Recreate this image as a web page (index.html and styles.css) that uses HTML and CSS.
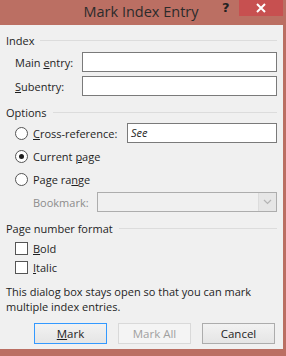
FILE: index.html
```html
<!DOCTYPE html>
<html lang="en">

<head>
    <meta charset="UTF-8">
    <title>Mark Index Entry</title>
    <link rel="stylesheet" href="styles.css">
</head>

<body>
    <div class="dialog">
        <div class="titlebar">
            <span class="title">Mark Index Entry</span>
            <span class="help">?</span>
            <span class="close">
                <svg width="10" height="10" viewBox="0 0 10 10">
                    <path d="M1 1 L9 9 M9 1 L1 9" stroke="#fff" stroke-width="2" />
                </svg>
            </span>
        </div>

        <div class="client">
            <div class="group-label"><span>Index</span></div>
            <div class="row">
                <label class="field-label">Main <u>e</u>ntry:</label>
                <div class="textbox"></div>
            </div>
            <div class="row">
                <label class="field-label"><u>S</u>ubentry:</label>
                <div class="textbox"></div>
            </div>

            <div class="group-label options"><span>Options</span></div>
            <div class="row radio-row">
                <span class="radio"></span>
                <label class="radio-label"><u>C</u>ross-reference:</label>
                <div class="textbox see">See</div>
            </div>
            <div class="row radio-row">
                <span class="radio checked"></span>
                <label class="radio-label">Current <u>p</u>age</label>
            </div>
            <div class="row radio-row">
                <span class="radio"></span>
                <label class="radio-label">Page ra<u>n</u>ge</label>
            </div>
            <div class="row bookmark-row">
                <label class="disabled-label">Bookmark:</label>
                <div class="select">
                    <span class="select-arrow">
                        <svg width="9" height="6" viewBox="0 0 9 6">
                            <path d="M1 1 L4.5 4.5 L8 1" stroke="#b4b4b4" stroke-width="1.2" fill="none" />
                        </svg>
                    </span>
                </div>
            </div>

            <div class="group-label format"><span>Page number format</span></div>
            <div class="check-row first">
                <span class="checkbox"></span>
                <label><u>B</u>old</label>
            </div>
            <div class="check-row">
                <span class="checkbox"></span>
                <label><u>I</u>talic</label>
            </div>

            <p class="note">This dialog box stays open so that you can mark multiple index entries.</p>

            <div class="buttons">
                <button class="default"><u>M</u>ark</button>
                <button disabled>Mark All</button>
                <button>Cancel</button>
            </div>
        </div>
    </div>
</body>

</html>
```

FILE: styles.css
```css
body {
    margin: 0;
    padding: 0;
    background-color: #bb6f63;
    font-family: "Open Sans", "Noto Sans", sans-serif;
    font-size: 11px;
    color: #1e1e1e;
}

.dialog {
    width: 286px;
    height: 356px;
    background-color: #bb6f63;
    overflow: hidden;
}

.titlebar {
    height: 25px;
    position: relative;
}

.title {
    display: block;
    text-align: center;
    font-size: 14.5px;
    line-height: 24px;
    color: #2b2b2b;
    padding-right: 4px;
}

.help {
    position: absolute;
    left: 222px;
    top: 0;
    font-family: "DejaVu Sans", sans-serif;
    font-weight: bold;
    font-size: 13px;
    line-height: 16px;
    color: #222;
}

.close {
    position: absolute;
    left: 239px;
    top: 0;
    width: 44px;
    height: 16px;
    background-color: #c75050;
    display: flex;
    align-items: center;
    justify-content: center;
}

.client {
    width: 283px;
    height: 324px;
    background-color: #f0f0f0;
    box-sizing: border-box;
    padding: 7px 6px 0 6px;
}

u {
    text-decoration: underline;
    text-underline-offset: 1px;
}

label {
    white-space: nowrap;
}

.group-label {
    display: flex;
    align-items: center;
    height: 16px;
}

.group-label::after {
    content: "";
    flex: 1;
    height: 1px;
    background-color: #dcdcdc;
    margin-left: 6px;
}

.options {
    margin-top: 8px;
}

.format {
    margin-top: 8px;
}

.row {
    display: flex;
    align-items: center;
    margin-top: 4px;
}

.field-label {
    width: 76px;
    padding-left: 9px;
    box-sizing: border-box;
}

.textbox {
    width: 195px;
    height: 20px;
    box-sizing: border-box;
    border: 1px solid #7a7a7a;
    background-color: #fff;
    flex-shrink: 0;
}

.textbox.see {
    width: 150px;
    margin-left: auto;
    font-style: italic;
    line-height: 18px;
    padding-left: 3px;
}

.radio-row {
    height: 20px;
    margin-top: 3px;
}

.radio {
    width: 11px;
    height: 11px;
    border: 1px solid #555;
    border-radius: 50%;
    background-color: #fff;
    margin-left: 9px;
    margin-right: 5px;
    position: relative;
    flex-shrink: 0;
}

.radio.checked::after {
    content: "";
    position: absolute;
    left: 3px;
    top: 3px;
    width: 5px;
    height: 5px;
    border-radius: 50%;
    background-color: #1e1e1e;
}

.bookmark-row {
    margin-top: 3px;
}

.disabled-label {
    color: #8c8c8c;
    width: 91px;
    padding-left: 27px;
    box-sizing: border-box;
}

.select {
    width: 180px;
    height: 20px;
    box-sizing: border-box;
    border: 1px solid #adadad;
    background-color: #f0f0f0;
    display: flex;
    justify-content: flex-end;
}

.select-arrow {
    width: 17px;
    border-left: 1px solid #dcdcdc;
    background-color: #e6e6e6;
    display: flex;
    align-items: center;
    justify-content: center;
}

.check-row {
    display: flex;
    align-items: center;
    height: 19px;
    margin-left: 9px;
}

.check-row.first {
    margin-top: 3px;
}

.checkbox {
    width: 11px;
    height: 11px;
    border: 1px solid #555;
    background-color: #fff;
    margin-right: 5px;
}

.note {
    margin: 7px 0 0 0;
    line-height: 15px;
    padding-right: 10px;
}

.buttons {
    display: flex;
    justify-content: flex-end;
    gap: 11px;
    margin-top: 9px;
    padding-right: 2px;
}

button {
    width: 73px;
    height: 21px;
    font-family: inherit;
    font-size: 11.5px;
    color: #1e1e1e;
    border: 1px solid #acacac;
    background: linear-gradient(#f2f2f2, #e5e5e5);
    padding: 0;
}

button.default {
    border-color: #3399ff;
}

button:disabled {
    color: #a0a0a0;
    border-color: #d9d9d9;
    background: #f4f4f4;
}
```
